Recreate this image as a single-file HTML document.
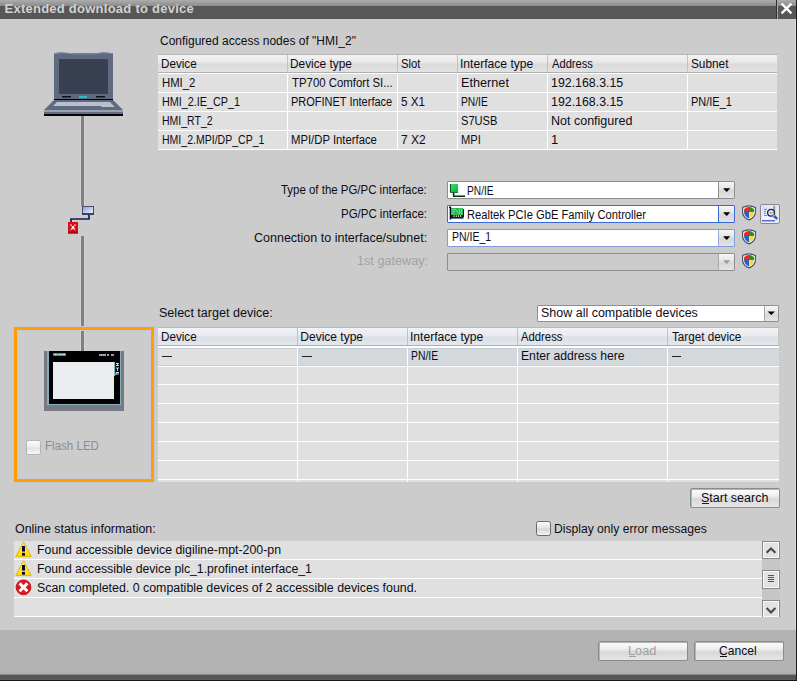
<!DOCTYPE html>
<html><head><meta charset="utf-8">
<style>
html,body{margin:0;padding:0;}
body{width:797px;height:681px;overflow:hidden;position:relative;background:#cccccc;font-family:"Liberation Sans",sans-serif;}
.a{position:absolute;box-sizing:border-box;}
.t{position:absolute;white-space:pre;transform-origin:0 0;font-family:"Liberation Sans",sans-serif;}
.hdr1{background:linear-gradient(#f3f3f3 0px,#e7e7e7 8px,#dadada 9px,#e2e2e2 17px);}
.hdr2{background:linear-gradient(#f1f3f6 0px,#e6e9ee 8px,#dce0e6 9px,#e3e6ea 17px);}
.btn{background:linear-gradient(#fdfdfd 0%,#eeeeee 40%,#d8d8d8 55%,#e6e6e6 100%);border:1px solid #8a8a8a;border-radius:2px;box-shadow:inset 1px 1px 0 #b4b4b4;}
.dd{background:linear-gradient(#f7f7f7,#e2e2e2 50%,#d6d6d6 51%,#e4e4e4);}
</style></head><body>

<!-- title bar -->
<div class="a" style="left:0;top:0;width:797px;height:6px;background:linear-gradient(#acacac,#8c8c8c);"></div>
<div class="a" style="left:0;top:6px;width:797px;height:13px;background:#575757;"></div>
<div class="a" style="left:776px;top:0;width:1px;height:19px;background:#2e2e2e;"></div>
<div class="a" style="left:777px;top:0;width:1px;height:19px;background:#a9a9a9;"></div>
<svg class="a" style="left:778px;top:0" width="18" height="19"><path d="M3.6 3.6 L13.4 13.4 M13.4 3.6 L3.6 13.4" stroke="#fff" stroke-width="2.3" stroke-linecap="butt"/></svg>
<!-- right border -->
<div class="a" style="left:795px;top:19px;width:1px;height:656px;background:#d9d9d9;"></div>
<div class="a" style="left:796px;top:0;width:1px;height:681px;background:#1b1b1b;"></div>

<!-- laptop -->
<svg class="a" style="left:0;top:0" width="160" height="130">
 <rect x="54" y="53" width="59" height="47" fill="#5f6a81"/>
 <path d="M54 54 Q60 52 66 53 T84 54 T100 53 T113 54" stroke="#7f8bb0" stroke-width="1.2" fill="none"/>
 <rect x="59" y="59" width="49" height="35" fill="#384051"/>
 <rect x="62" y="96" width="9" height="1.5" fill="#111"/>
 <rect x="96" y="96" width="9" height="1.5" fill="#111"/>
 <rect x="79" y="96" width="8" height="2" fill="#1fc4c8"/>
 <rect x="54" y="99" width="59" height="1.2" fill="#000"/>
 <path d="M54 100 L113 100 L123 110 L44 110 Z" fill="#5f6a81"/>
 <path d="M57 102 L110 102 L115 107 L102 107 L101 106 L53 106 Z" fill="#b9c0cc"/>
 <rect x="44" y="110" width="79" height="2" fill="#97a1b3"/>
 <rect x="44" y="112" width="79" height="2" fill="#626d84"/>
 <rect x="44" y="114" width="79" height="2" fill="#050505"/>
</svg>
<!-- stems -->
<div class="a" style="left:80px;top:116px;width:5px;height:90px;background:#d4d4d4;"></div>
<div class="a" style="left:80px;top:236px;width:5px;height:115px;background:#d4d4d4;"></div>
<div class="a" style="left:81px;top:116px;width:3px;height:90px;background:#808080;"></div>
<div class="a" style="left:81px;top:236px;width:3px;height:115px;background:#808080;"></div>
<!-- network icon -->
<svg class="a" style="left:60px;top:200px" width="40" height="40">
 <defs><linearGradient id="mg" x1="0" y1="0" x2="1" y2="1"><stop offset="0" stop-color="#8c9ed8"/><stop offset="1" stop-color="#f4f6ff"/></linearGradient></defs>
 <rect x="22.5" y="6.5" width="11" height="8" fill="url(#mg)" stroke="#454f6a" stroke-width="1"/>
 <rect x="22" y="13" width="12" height="2" fill="#3a4258"/>
 <path d="M29 15 V19 H11 V22" stroke="#141458" stroke-width="1.6" fill="none"/>
 <rect x="8" y="22" width="10" height="11.5" fill="#d80e14"/>
 <rect x="8" y="31.5" width="10" height="2" fill="#a80808"/>
 <path d="M10.5 24.5 L15.5 30.5 M15.5 24.5 L10.5 30.5" stroke="#fff" stroke-width="1.2" stroke-dasharray="1.5 1" />
 <rect x="11.8" y="26.3" width="2.4" height="2.4" fill="#fff"/>
</svg>
<!-- orange selection box -->
<div class="a" style="left:13px;top:326px;width:142px;height:157px;border:1px solid #c3c8d4;"></div>
<div class="a" style="left:14px;top:327px;width:140px;height:155px;border:3px solid #ffa000;"></div>
<div class="a" style="left:17px;top:330px;width:134px;height:149px;border:1px solid #c6cad6;"></div>
<!-- HMI device -->
<svg class="a" style="left:40px;top:345px" width="90" height="70">
 <rect x="4" y="6" width="80" height="60" fill="#767b83"/>
 <rect x="7" y="6" width="74" height="54" fill="#86aebb"/>
 <rect x="9" y="6" width="71" height="53" fill="#000"/>
 <rect x="13" y="17" width="61" height="37" fill="#ebecf0"/>
 <rect x="13" y="8" width="13" height="3" fill="#2f9a9c"/>
 <path d="M14.5 9.5 H16.5 M17.5 9.5 H18.5 M19.5 9.5 H21.5 M22.5 9.5 H25" stroke="#e8f4f4" stroke-width="1.2"/>
 <path d="M59 10 H66 M67 10 H69 M71 10 H74" stroke="#c8cce8" stroke-width="1.4"/>
 <rect x="63" y="9.3" width="1.5" height="1.4" fill="#e8a040"/>
 <rect x="74" y="17" width="6" height="14" fill="#000"/>
 <rect x="74" y="17" width="1.2" height="14" fill="#7fb4c2"/>
 <path d="M76 18.5 H79 M76 20.5 H79 M77.5 18.5 V20.5 M76 23 H79 M77.5 23 V26 M76 27.5 H79 M76 27.5 V30 M76 29 H79" stroke="#e6eef0" stroke-width="0.9"/>
</svg>
<!-- Flash LED checkbox -->
<div class="a" style="left:26px;top:440px;width:15px;height:15px;border:1px solid #b4b4b4;border-radius:2.5px;background:linear-gradient(#fdfdfd,#ececec 45%,#e2e2e2 55%,#f8f8f8);"></div>

<!-- table 1 -->
<div class="a" style="left:158px;top:54px;width:619px;height:1px;background:#b6b6b6;"></div>
<div class="a hdr1" style="left:158px;top:55px;width:619px;height:17px;"></div>
<div class="a" style="left:158px;top:72px;width:619px;height:1px;background:#b0b0b0;"></div>
<div class="a" style="left:158px;top:73px;width:619px;height:77px;background:#ffffff;"></div>
<div class="a" style="left:158px;top:74px;width:619px;height:18px;background:#e0e0e0;"></div>
<div class="a" style="left:158px;top:93px;width:619px;height:18px;background:#e0e0e0;"></div>
<div class="a" style="left:158px;top:112px;width:619px;height:18px;background:#e0e0e0;"></div>
<div class="a" style="left:158px;top:131px;width:619px;height:18px;background:#e0e0e0;"></div>
<div class="a" style="left:287px;top:55px;width:1px;height:17px;background:#c2c2c2;"></div>
<div class="a" style="left:397px;top:55px;width:1px;height:17px;background:#c2c2c2;"></div>
<div class="a" style="left:457px;top:55px;width:1px;height:17px;background:#c2c2c2;"></div>
<div class="a" style="left:547px;top:55px;width:1px;height:17px;background:#c2c2c2;"></div>
<div class="a" style="left:687px;top:55px;width:1px;height:17px;background:#c2c2c2;"></div>
<div class="a" style="left:287px;top:73px;width:1px;height:77px;background:#fff;"></div>
<div class="a" style="left:397px;top:73px;width:1px;height:77px;background:#fff;"></div>
<div class="a" style="left:457px;top:73px;width:1px;height:77px;background:#fff;"></div>
<div class="a" style="left:547px;top:73px;width:1px;height:77px;background:#fff;"></div>
<div class="a" style="left:687px;top:73px;width:1px;height:77px;background:#fff;"></div>

<!-- form fields -->
<div class="a" style="left:447px;top:181px;width:288px;height:18px;border:1px solid #8e8e8e;border-radius:1px;background:#fff;"></div>
<div class="a dd" style="left:718px;top:182px;width:16px;height:16px;border-left:1px solid #8e8e8e;"></div>
<div class="a" style="left:447px;top:205px;width:288px;height:18px;border:1px solid #3a6ad6;border-radius:1px;background:#fff;"></div>
<div class="a dd" style="left:718px;top:206px;width:16px;height:16px;border-left:1px solid #3a6ad6;"></div>
<div class="a" style="left:447px;top:229px;width:288px;height:18px;border:1px solid #7e9cd8;border-radius:1px;background:#fff;"></div>
<div class="a dd" style="left:718px;top:230px;width:16px;height:16px;border-left:1px solid #9aaedb;"></div>
<div class="a" style="left:447px;top:253px;width:288px;height:18px;border:1px solid #8e8e8e;border-radius:1px;background:#cbcbcb;"></div>
<div class="a dd" style="left:718px;top:254px;width:16px;height:16px;border-left:1px solid #a8a8a8;"></div>
<svg class="a" style="left:719px;top:181px" width="16" height="90">
 <path d="M4 7.2 H11.3 L7.65 11 Z" fill="#000"/>
 <path d="M4 31.2 H11.3 L7.65 35 Z" fill="#000"/>
 <path d="M4 55.2 H11.3 L7.65 59 Z" fill="#000"/>
 <path d="M4 79.2 H11.3 L7.65 83 Z" fill="#9a9a9a"/>
</svg>
<!-- field icons -->
<svg class="a" style="left:445px;top:180px" width="24" height="42">
 <defs><linearGradient id="gq" x1="0" y1="0" x2="1" y2="1"><stop offset="0" stop-color="#3ee070"/><stop offset="1" stop-color="#08b838"/></linearGradient></defs>
 <rect x="5" y="4" width="8" height="8" fill="url(#gq)"/>
 <path d="M5.4 4 V12.4 H13" stroke="#083818" stroke-width="0.9" fill="none"/>
 <path d="M8.6 12.4 V16.2 H20" stroke="#062a10" stroke-width="1.5" fill="none"/>
 <path d="M9.5 12.4 V15.4 H20" stroke="#28c860" stroke-width="0.7" fill="none"/>
 <rect x="6" y="28" width="12" height="7" fill="#2cb858"/>
 <path d="M6.5 29.5 H11 L13.5 33 M6.5 31.5 H10 M6.5 33.5 H9 M14.5 28.5 V34.5 M16.5 28.5 V34.5" stroke="#86e8a0" stroke-width="0.7" fill="none"/>
 <path d="M18.5 29 V37" stroke="#101820" stroke-width="1"/>
 <rect x="6" y="35" width="12.5" height="3.6" fill="#0a1850"/>
 <rect x="8.6" y="35.2" width="1" height="1.8" fill="#f8d890"/>
 <rect x="10.8" y="35.2" width="1" height="1.8" fill="#f8d890"/>
 <rect x="13" y="35.2" width="1" height="1.8" fill="#f8d890"/>
 <rect x="15.2" y="35.2" width="1" height="1.8" fill="#f8d890"/>
 <path d="M4 27.3 H5.4 V39.6" stroke="#000018" stroke-width="1.4" fill="none"/>
</svg>
<!-- shields -->
<svg class="a" style="left:741px;top:204px" width="17" height="66">
 <defs>
  <clipPath id="shc"><path d="M3 5.6 Q4.5 3.6 6 3.3 Q8 2.6 10 3.3 Q11.5 3.6 13 5.6 L13 8.2 Q12.8 12 8 14.6 Q3.2 12 3 8.2 Z"/></clipPath>
  <linearGradient id="shr" x1="0" y1="0" x2="1" y2="1"><stop offset="0" stop-color="#d83c3c"/><stop offset="1" stop-color="#ff1a14"/></linearGradient>
  <linearGradient id="shy" x1="0" y1="0" x2="1" y2="1"><stop offset="0" stop-color="#ffe850"/><stop offset="1" stop-color="#e0b020"/></linearGradient>
  <g id="sh">
   <path d="M1.6 3.4 Q8 0.2 14.4 3.4 L14.4 8.2 Q14.4 13.2 8 15.9 Q1.6 13.2 1.6 8.2 Z" fill="#fbfbfc" stroke="#4a5264" stroke-width="1.15"/>
   <g clip-path="url(#shc)">
    <rect x="0" y="0" width="8" height="8" fill="url(#shr)"/>
    <rect x="8" y="0" width="9" height="8" fill="#1f9424"/>
    <rect x="0" y="8" width="8" height="9" fill="#2262c0"/>
    <rect x="8" y="8" width="9" height="9" fill="url(#shy)"/>
   </g>
  </g>
 </defs>
 <use href="#sh" x="0" y="0"/>
 <use href="#sh" x="0" y="24"/>
 <use href="#sh" x="0" y="48"/>
</svg>
<!-- search button -->
<div class="a" style="left:760px;top:204px;width:20px;height:20px;border:1.5px solid #8a8a8a;border-radius:2px;background:#e9e9e9;"></div>
<svg class="a" style="left:760px;top:204px" width="20" height="20">
 <defs><linearGradient id="dg" x1="0" y1="0" x2="1" y2="1"><stop offset="0" stop-color="#d4dcff"/><stop offset="0.6" stop-color="#f4f6ff"/><stop offset="1" stop-color="#e4e8f8"/></linearGradient></defs>
 <rect x="2" y="1.8" width="13.3" height="15" fill="url(#dg)"/>
 <rect x="2" y="16" width="13" height="1.4" fill="#5464e0"/>
 <rect x="13" y="1.8" width="2.3" height="12" fill="#9aa2b8"/>
 <path d="M4 5.3 H7 M4 7.3 H6 M4 9.3 H6 M4 11.5 H7" stroke="#7a7a86" stroke-width="0.9"/>
 <circle cx="11" cy="8.7" r="3.4" fill="#e2e3ea" stroke="#1c1c58" stroke-width="1.3"/>
 <rect x="10" y="8" width="2.4" height="1.5" fill="#9a9aa6"/>
 <path d="M13.2 11 L14.6 12.4" stroke="#e8a818" stroke-width="2.2"/>
 <path d="M14.4 12.2 L17.2 15" stroke="#2458b8" stroke-width="2.4"/>
</svg>

<!-- select target device dropdown -->
<div class="a" style="left:537px;top:305px;width:242px;height:17px;border:1px solid #8e8e8e;border-radius:1px;background:#fff;"></div>
<div class="a dd" style="left:764px;top:306px;width:14px;height:15px;border-left:1px solid #a8a8a8;"></div>
<svg class="a" style="left:764px;top:305px" width="15" height="17"><path d="M3.5 6.5 H11 L7.25 10 Z" fill="#000"/></svg>

<!-- table 2 -->
<div class="a" style="left:158px;top:327px;width:621px;height:1px;background:#b8b8b8;"></div>
<div class="a hdr2" style="left:158px;top:328px;width:621px;height:17px;"></div>
<div class="a" style="left:158px;top:345px;width:621px;height:1px;background:#b0b0b0;"></div>
<div class="a" style="left:778px;top:328px;width:1px;height:17px;background:#c2c2c2;"></div>
<div class="a" style="left:158px;top:346px;width:621px;height:136px;background:#fff;"></div>
<div class="a" style="left:158px;top:348px;width:621px;height:18px;background:#c5cdd6;"></div>
<div class="a" style="left:158px;top:349px;width:139px;height:16px;background:#e0e0e0;"></div>
<div class="a" style="left:297px;top:349px;width:482px;height:16px;background:#d3d8dd;"></div>
<div class="a" style="left:158px;top:367px;width:621px;height:17px;background:#e0e0e0;"></div>
<div class="a" style="left:158px;top:385px;width:621px;height:18px;background:#e0e0e0;"></div>
<div class="a" style="left:158px;top:404px;width:621px;height:18px;background:#e0e0e0;"></div>
<div class="a" style="left:158px;top:423px;width:621px;height:18px;background:#e0e0e0;"></div>
<div class="a" style="left:158px;top:442px;width:621px;height:18px;background:#e0e0e0;"></div>
<div class="a" style="left:158px;top:461px;width:621px;height:18px;background:#e0e0e0;"></div>
<div class="a" style="left:158px;top:480px;width:621px;height:2px;background:#e0e0e0;"></div>
<div class="a" style="left:297px;top:328px;width:1px;height:17px;background:#c2c2c2;"></div>
<div class="a" style="left:407px;top:328px;width:1px;height:17px;background:#c2c2c2;"></div>
<div class="a" style="left:517px;top:328px;width:1px;height:17px;background:#c2c2c2;"></div>
<div class="a" style="left:667px;top:328px;width:1px;height:17px;background:#c2c2c2;"></div>
<div class="a" style="left:297px;top:346px;width:1px;height:136px;background:#fff;"></div>
<div class="a" style="left:407px;top:346px;width:1px;height:136px;background:#fff;"></div>
<div class="a" style="left:517px;top:346px;width:1px;height:136px;background:#fff;"></div>
<div class="a" style="left:667px;top:346px;width:1px;height:136px;background:#fff;"></div>
<!-- dashes -->
<div class="a" style="left:162px;top:356px;width:10px;height:1px;background:#202020;"></div>
<div class="a" style="left:302px;top:356px;width:10px;height:1px;background:#202020;"></div>
<div class="a" style="left:672px;top:356px;width:9px;height:1px;background:#202020;"></div>

<!-- start search button -->
<div class="a btn" style="left:690px;top:488px;width:90px;height:20px;"></div>
<div class="a" style="left:702px;top:503px;width:7px;height:1px;background:#1c1c24;"></div>
<!-- display only error checkbox -->
<div class="a" style="left:536px;top:521px;width:15px;height:15px;border:1.3px solid #6c6c6c;border-radius:2.5px;background:linear-gradient(#fbfbfb,#e4e4e4 45%,#d6d6d6 55%,#f4f4f4);"></div>

<!-- log -->
<div class="a" style="left:14px;top:541px;width:748px;height:76px;background:#fff;"></div>
<div class="a" style="left:14px;top:541px;width:748px;height:18px;background:#e0e0e0;"></div>
<div class="a" style="left:14px;top:560px;width:748px;height:18px;background:#e0e0e0;"></div>
<div class="a" style="left:14px;top:579px;width:748px;height:18px;background:#e0e0e0;"></div>
<div class="a" style="left:14px;top:598px;width:748px;height:18px;background:#e0e0e0;"></div>
<!-- scrollbar -->
<div class="a" style="left:762px;top:541px;width:18px;height:76px;background:#c6c6c6;"></div>
<div class="a" style="left:762px;top:541px;width:18px;height:18px;border:1px solid #8a8a8a;background:#e2e2e2;box-shadow:inset 0 0 0 1px #fafafa;"></div>
<div class="a" style="left:762px;top:570px;width:18px;height:19px;border:1px solid #8a8a8a;background:#e2e2e2;box-shadow:inset 0 0 0 1px #fafafa;"></div>
<div class="a" style="left:762px;top:600px;width:18px;height:17px;border:1px solid #8a8a8a;border-bottom:none;background:#e2e2e2;box-shadow:inset 0 0 0 1px #fafafa;"></div>
<svg class="a" style="left:762px;top:541px" width="18" height="76">
 <path d="M4.6 11.8 L9 7.4 L13.4 11.8" stroke="#484848" stroke-width="2.1" fill="none"/>
 <path d="M6 34.5 H12 M6 36.5 H12 M6 38.5 H12 M6 40.5 H12" stroke="#555" stroke-width="1"/>
 <path d="M4.6 67 L9 71.4 L13.4 67" stroke="#484848" stroke-width="2.1" fill="none"/>
</svg>
<!-- log icons -->
<svg class="a" style="left:14px;top:540px" width="20" height="58">
 <defs>
  <linearGradient id="yg" x1="0" y1="0" x2="0" y2="1"><stop offset="0" stop-color="#fff25a"/><stop offset="1" stop-color="#ffdc00"/></linearGradient>
  <g id="wr">
   <path d="M9.5 1.8 L17.2 16.4 L1.8 16.4 Z" fill="url(#yg)" stroke="#d8b400" stroke-width="0.9" stroke-linejoin="round"/>
   <rect x="8" y="6" width="3" height="5.5" fill="#05053a"/>
   <rect x="8" y="12.9" width="3" height="2.8" fill="#05053a"/>
  </g>
 </defs>
 <use href="#wr" x="0" y="0"/>
 <use href="#wr" x="0" y="19"/>
 <circle cx="9.5" cy="47.3" r="7.4" fill="#e2141e" stroke="#b00a12" stroke-width="0.8"/>
 <path d="M5.6 43.4 L13.4 51.2 M13.4 43.4 L5.6 51.2" stroke="#fff" stroke-width="3"/>
</svg>

<!-- footer -->
<div class="a" style="left:0;top:630px;width:796px;height:44px;background:#b3b3b3;"></div>
<div class="a" style="left:0;top:673px;width:796px;height:1px;background:#a9a9a9;"></div>
<div class="a" style="left:0;top:674px;width:796px;height:1px;background:#8c8c8c;"></div>
<div class="a" style="left:0;top:675px;width:796px;height:4px;background:#555555;"></div>
<div class="a" style="left:0;top:679px;width:796px;height:1px;background:#5c5c5c;"></div>
<div class="a" style="left:0;top:680px;width:797px;height:1px;background:#181818;"></div>
<div class="a btn" style="left:598px;top:641px;width:90px;height:20px;"></div>
<div class="a btn" style="left:694px;top:641px;width:90px;height:20px;"></div>
<div class="a" style="left:629px;top:656px;width:7px;height:1px;background:#a0a0a0;"></div>
<div class="a" style="left:720px;top:656px;width:7px;height:1px;background:#0c0c16;"></div>

<div class="t" style="left:4.50px;top:1.60px;font-size:13px;font-weight:700;line-height:13px;color:#d2d2d2;letter-spacing:0.250px;">Extended download to device</div>
<div class="t" style="left:160.00px;top:34.50px;font-size:12px;font-weight:400;line-height:12px;color:#0c0c16;">Configured access nodes of &quot;HMI_2&quot;</div>
<div class="t" style="left:161.03px;top:58.00px;font-size:12px;font-weight:400;line-height:12px;color:#0c0c16;transform:scaleX(0.9714);">Device</div>
<div class="t" style="left:290.31px;top:58.00px;font-size:12px;font-weight:400;line-height:12px;color:#0c0c16;transform:scaleX(0.9869);">Device type</div>
<div class="t" style="left:400.76px;top:58.00px;font-size:12px;font-weight:400;line-height:12px;color:#0c0c16;transform:scaleX(0.9400);">Slot</div>
<div class="t" style="left:460.29px;top:58.00px;font-size:12px;font-weight:400;line-height:12px;color:#0c0c16;transform:scaleX(1.0070);">Interface type</div>
<div class="t" style="left:551.60px;top:58.00px;font-size:12px;font-weight:400;line-height:12px;color:#0c0c16;transform:scaleX(0.9295);">Address</div>
<div class="t" style="left:690.62px;top:58.00px;font-size:12px;font-weight:400;line-height:12px;color:#0c0c16;transform:scaleX(0.9838);">Subnet</div>
<div class="t" style="left:161.56px;top:76.80px;font-size:12px;font-weight:400;line-height:12px;color:#0c0c16;transform:scaleX(0.9441);">HMI_2</div>
<div class="t" style="left:291.80px;top:76.80px;font-size:12px;font-weight:400;line-height:12px;color:#0c0c16;transform:scaleX(0.9505);">TP700 Comfort SI...</div>
<div class="t" style="left:460.94px;top:76.80px;font-size:12px;font-weight:400;line-height:12px;color:#0c0c16;transform:scaleX(1.0568);">Ethernet</div>
<div class="t" style="left:550.97px;top:76.80px;font-size:12px;font-weight:400;line-height:12px;color:#0c0c16;transform:scaleX(1.0304);">192.168.3.15</div>
<div class="t" style="left:161.60px;top:95.80px;font-size:12px;font-weight:400;line-height:12px;color:#0c0c16;transform:scaleX(0.9000);">HMI_2.IE_CP_1</div>
<div class="t" style="left:290.88px;top:95.80px;font-size:12px;font-weight:400;line-height:12px;color:#0c0c16;transform:scaleX(0.9156);">PROFINET Interface</div>
<div class="t" style="left:401.03px;top:95.80px;font-size:12px;font-weight:400;line-height:12px;color:#0c0c16;transform:scaleX(0.9696);">5 X1</div>
<div class="t" style="left:461.15px;top:95.80px;font-size:12px;font-weight:400;line-height:12px;color:#0c0c16;transform:scaleX(0.8533);">PN/IE</div>
<div class="t" style="left:550.97px;top:95.80px;font-size:12px;font-weight:400;line-height:12px;color:#0c0c16;transform:scaleX(1.0304);">192.168.3.15</div>
<div class="t" style="left:691.09px;top:95.80px;font-size:12px;font-weight:400;line-height:12px;color:#0c0c16;transform:scaleX(0.9140);">PN/IE_1</div>
<div class="t" style="left:161.62px;top:114.80px;font-size:12px;font-weight:400;line-height:12px;color:#0c0c16;transform:scaleX(0.8750);">HMI_RT_2</div>
<div class="t" style="left:461.07px;top:114.80px;font-size:12px;font-weight:400;line-height:12px;color:#0c0c16;transform:scaleX(0.9263);">S7USB</div>
<div class="t" style="left:550.96px;top:114.80px;font-size:12px;font-weight:400;line-height:12px;color:#0c0c16;transform:scaleX(1.0421);">Not configured</div>
<div class="t" style="left:161.62px;top:133.80px;font-size:12px;font-weight:400;line-height:12px;color:#0c0c16;transform:scaleX(0.8774);">HMI_2.MPI/DP_CP_1</div>
<div class="t" style="left:290.86px;top:133.80px;font-size:12px;font-weight:400;line-height:12px;color:#0c0c16;transform:scaleX(0.9422);">MPI/DP Interface</div>
<div class="t" style="left:401.00px;top:133.80px;font-size:12px;font-weight:400;line-height:12px;color:#0c0c16;">7 X2</div>
<div class="t" style="left:461.07px;top:133.80px;font-size:12px;font-weight:400;line-height:12px;color:#0c0c16;transform:scaleX(0.9263);">MPI</div>
<div class="t" style="left:550.92px;top:133.80px;font-size:12px;font-weight:400;line-height:12px;color:#0c0c16;transform:scaleX(1.0800);">1</div>
<div class="t" style="left:281.40px;top:183.80px;font-size:12px;font-weight:400;line-height:12px;color:#0c0c16;transform:scaleX(0.9539);">Type of the PG/PC interface:</div>
<div class="t" style="left:341.34px;top:207.70px;font-size:12px;font-weight:400;line-height:12px;color:#0c0c16;transform:scaleX(0.9557);">PG/PC interface:</div>
<div class="t" style="left:254.46px;top:231.50px;font-size:12px;font-weight:400;line-height:12px;color:#0c0c16;transform:scaleX(1.0421);">Connection to interface/subnet:</div>
<div class="t" style="left:356.85px;top:255.30px;font-size:12px;font-weight:400;line-height:12px;color:#a3a3a3;transform:scaleX(1.0538);">1st gateway:</div>
<div class="t" style="left:466.55px;top:184.90px;font-size:12px;font-weight:400;line-height:12px;color:#0c0c16;transform:scaleX(0.8500);">PN/IE</div>
<div class="t" style="left:466.77px;top:208.70px;font-size:12px;font-weight:400;line-height:12px;color:#0c0c16;transform:scaleX(0.9319);">Realtek PCIe GbE Family Controller</div>
<div class="t" style="left:451.73px;top:231.40px;font-size:12px;font-weight:400;line-height:12px;color:#0c0c16;transform:scaleX(0.8744);">PN/IE_1</div>
<div class="t" style="left:159.45px;top:307.10px;font-size:12px;font-weight:400;line-height:12px;color:#0c0c16;transform:scaleX(1.0458);">Select target device:</div>
<div class="t" style="left:540.86px;top:307.00px;font-size:12px;font-weight:400;line-height:12px;color:#0c0c16;transform:scaleX(1.0403);">Show all compatible devices</div>
<div class="t" style="left:161.03px;top:330.90px;font-size:12px;font-weight:400;line-height:12px;color:#0c0c16;transform:scaleX(0.9714);">Device</div>
<div class="t" style="left:300.30px;top:330.90px;font-size:12px;font-weight:400;line-height:12px;color:#0c0c16;">Device type</div>
<div class="t" style="left:410.29px;top:330.90px;font-size:12px;font-weight:400;line-height:12px;color:#0c0c16;transform:scaleX(1.0070);">Interface type</div>
<div class="t" style="left:521.30px;top:330.90px;font-size:12px;font-weight:400;line-height:12px;color:#0c0c16;transform:scaleX(0.9409);">Address</div>
<div class="t" style="left:671.80px;top:330.90px;font-size:12px;font-weight:400;line-height:12px;color:#0c0c16;transform:scaleX(0.9718);">Target device</div>
<div class="t" style="left:411.34px;top:349.70px;font-size:12px;font-weight:400;line-height:12px;color:#0c0c16;transform:scaleX(0.8633);">PN/IE</div>
<div class="t" style="left:521.49px;top:349.70px;font-size:12px;font-weight:400;line-height:12px;color:#0c0c16;transform:scaleX(1.0139);">Enter address here</div>
<div class="t" style="left:44.74px;top:439.80px;font-size:12px;font-weight:400;line-height:12px;color:#8c8c94;transform:scaleX(0.9630);">Flash LED</div>
<div class="t" style="left:700.96px;top:491.70px;font-size:12px;font-weight:400;line-height:12px;color:#0c0c16;transform:scaleX(1.0413);">Start search</div>
<div class="t" style="left:15.27px;top:523.10px;font-size:12px;font-weight:400;line-height:12px;color:#0c0c16;transform:scaleX(1.0336);">Online status information:</div>
<div class="t" style="left:553.99px;top:522.90px;font-size:12px;font-weight:400;line-height:12px;color:#0c0c16;transform:scaleX(1.0093);">Display only error messages</div>
<div class="t" style="left:37.07px;top:544.40px;font-size:12px;font-weight:400;line-height:12px;color:#0c0c16;transform:scaleX(1.0275);">Found accessible device digiline-mpt-200-pn</div>
<div class="t" style="left:37.08px;top:563.40px;font-size:12px;font-weight:400;line-height:12px;color:#0c0c16;transform:scaleX(1.0198);">Found accessible device plc_1.profinet interface_1</div>
<div class="t" style="left:37.07px;top:582.40px;font-size:12px;font-weight:400;line-height:12px;color:#0c0c16;transform:scaleX(1.0320);">Scan completed. 0 compatible devices of 2 accessible devices found.</div>
<div class="t" style="left:627.94px;top:645.40px;font-size:12px;font-weight:400;line-height:12px;color:#a0a0a0;transform:scaleX(1.0600);">Load</div>
<div class="t" style="left:718.89px;top:645.40px;font-size:12px;font-weight:400;line-height:12px;color:#0c0c16;transform:scaleX(1.0083);">Cancel</div>
</body></html>
